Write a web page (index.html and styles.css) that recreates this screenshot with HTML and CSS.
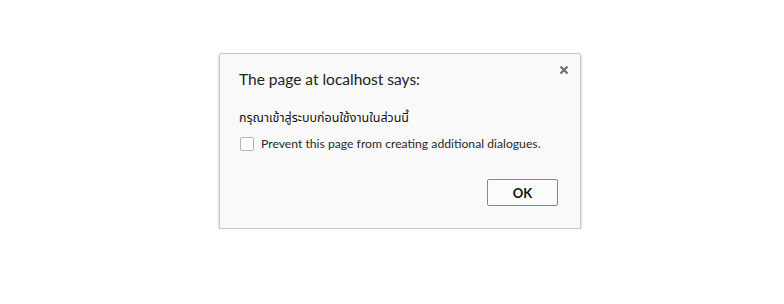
FILE: index.html
```html
<!DOCTYPE html>
<html lang="th">
<head>
    <meta charset="UTF-8">
    <title>The page at localhost says:</title>
    <link rel="stylesheet" href="styles.css">
</head>
<body>
    <div class="overlay">
        <div class="dialog">
            <button class="close-btn" title="Close">
                <svg width="10" height="10" viewBox="0 0 10 10">
                    <path d="M1.5 1.5 L8.5 8.5 M8.5 1.5 L1.5 8.5" stroke="#6f6f6f" stroke-width="2.2"/>
                </svg>
            </button>
            <h1 class="dialog-title">The page at localhost says:</h1>
            <p class="dialog-message">กรุณาเข้าสู่ระบบก่อนใช้งานในส่วนนี้</p>
            <label class="dialog-check">
                <span class="check-box"></span>
                Prevent this page from creating additional dialogues.
            </label>
            <div class="dialog-actions">
                <button class="ok-btn">OK</button>
            </div>
        </div>
    </div>
</body>
</html>
```

FILE: styles.css
```css
* {
    margin: 0;
    padding: 0;
    box-sizing: border-box;
}

body {
    background: #fff;
    font-family: Lato, "Noto Sans", "Noto Sans Thai", sans-serif;
    color: #222;
}

.overlay {
    padding: 53px 0 0 219px;
}

.dialog {
    position: relative;
    width: 362px;
    height: 176px;
    background: #f9f9f9;
    border: 1px solid #c8c8c8;
    border-radius: 2px;
    box-shadow: 0 2px 3px rgba(0, 0, 0, 0.25);
    padding: 14px 20px 0 19px;
}

.close-btn {
    position: absolute;
    top: 10px;
    right: 10px;
    width: 12px;
    height: 12px;
    border: none;
    background: none;
    display: flex;
    align-items: center;
    justify-content: center;
}

.dialog-title {
    font-size: 15.5px;
    font-weight: 400;
    color: #222;
    line-height: 22px;
    white-space: nowrap;
}

.dialog-message {
    margin-top: 19px;
    font-family: "Noto Sans", "Noto Sans Thai", sans-serif;
    font-size: 12.5px;
    line-height: 18px;
    color: #111;
    white-space: nowrap;
}

.dialog-check {
    margin-top: 8px;
    display: flex;
    align-items: center;
    gap: 7px;
    font-size: 12.2px;
    line-height: 18px;
    color: #2a2a2a;
    padding-left: 1px;
    white-space: nowrap;
}

.check-box {
    flex-shrink: 0;
    width: 14px;
    height: 14px;
    border: 1px solid #b5b5b5;
    border-radius: 2px;
    background: #fff;
}

.dialog-actions {
    margin-top: 26px;
    display: flex;
    justify-content: flex-end;
    padding-right: 2px;
}

.ok-btn {
    width: 71px;
    height: 27px;
    border: 1px solid #4d90fe;
    border-radius: 2px;
    background: #fbfbfb;
    font-family: inherit;
    font-size: 13px;
    font-weight: 700;
    color: #111;
}
```
